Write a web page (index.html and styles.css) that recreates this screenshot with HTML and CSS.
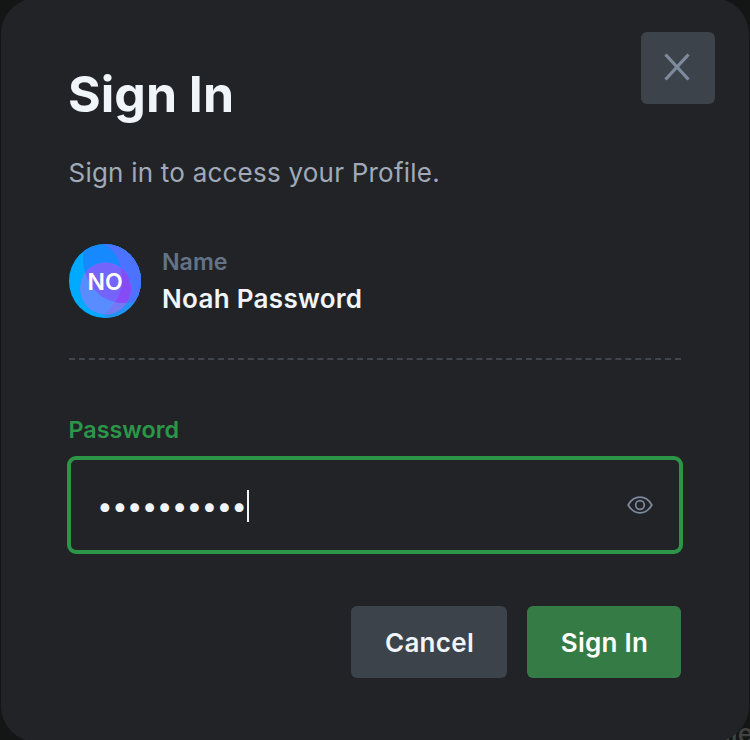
FILE: index.html
```html
<!DOCTYPE html>
<html lang="en">
<head>
<meta charset="utf-8">
<title>Sign In</title>
<link rel="stylesheet" href="styles.css">
</head>
<body>
<span class="backdrop-text" aria-hidden="true">ile</span>
<main class="dialog">
  <header class="header">
    <div>
      <h1 class="title">Sign In</h1>
      <p class="subtitle">Sign in to access your Profile.</p>
    </div>
    <button class="close" aria-label="Close">
      <svg width="26" height="28" viewBox="0 0 26 28"><path d="M1.5 1.5 24.5 26.5M24.5 1.5 1.5 26.5"/></svg>
    </button>
  </header>
  <section class="profile">
    <div class="avatar">
      <svg class="avatar-art" viewBox="0 0 72 74">
        <defs><clipPath id="disc"><ellipse cx="36" cy="37" rx="36" ry="37"/></clipPath></defs>
        <g clip-path="url(#disc)">
          <rect width="72" height="74" fill="#00aaff"/>
          <path d="M31-2C43 3 52 15 53 31C54 48 46 61 33 74H80V-2Z" fill="#2492f3"/>
          <path d="M18-4C12 9 13 26 20 38C30 55 46 63 70 57L80 50V-6Z" fill="#1689ff"/>
          <path d="M31-2C43 3 52 15 53 31C54 42 51 51 46 58C55 60 62 59 70 57L80 50V-6Z" fill="#4b73ff"/>
          <ellipse cx="36.500" cy="44.500" rx="25.500" ry="26" fill="#598cff"/>
          <clipPath id="inner"><ellipse cx="36.500" cy="44.500" rx="25.500" ry="26"/></clipPath>
          <g clip-path="url(#inner)">
            <path d="M31-2C43 3 52 15 53 31C54 48 46 61 33 74H80V-2Z" fill="#7478f2"/>
            <path d="M18-4C12 9 13 26 20 38C30 55 46 63 70 57L80 50V-6Z" fill="#7464fc"/>
            <path d="M31-2C43 3 52 15 53 31C54 42 51 51 46 58C55 60 62 59 70 57L80 50V-6Z" fill="#874bf5"/>
          </g>
        </g>
      </svg>
      <span class="initials">NO</span>
    </div>
    <div>
      <div class="name-label">Name</div>
      <div class="name">Noah Password</div>
    </div>
  </section>
  <svg class="divider" viewBox="0 0 612 2"><path d="M0 1H612"/></svg>
  <div class="label">Password</div>
  <div class="field">
    <span class="mask">••••••••••</span><span class="caret"></span>
    <svg class="eye" width="26" height="18" viewBox="0 0 26 18"><path d="M1.200 9C7 -1.400 19 -1.400 24.800 9C19 19.400 7 19.400 1.200 9Z" /><circle cx="13" cy="9" r="4.300"/></svg>
  </div>
  <footer class="actions">
    <button class="button cancel">Cancel</button>
    <button class="button submit">Sign In</button>
  </footer>
</main>
</body>
</html>
```
FILE: styles.css
```css
* { box-sizing: border-box; }
body {
  margin: 0;
  height: 740px;
  overflow: hidden;
  background: #141515;
  font-family: Inter, sans-serif;
  color: #f0f5f9;
}
.backdrop-text {
  position: absolute;
  right: -3px;
  top: 719px;
  color: #41423f;
  font-size: 26px;
  line-height: 30px;
  font-weight: 600;
}
.dialog {
  position: relative;
  width: 748px;
  height: 744px;
  margin: -2px 1px 0;
  padding: 34px 34px 0 68px;
  border-radius: 36px;
  background: #222327;
}
.header {
  display: flex;
  justify-content: space-between;
  height: 212px;
}
.title {
  margin: 32px 0 0 -1px;
  font-size: 50px;
  line-height: 60px;
  font-weight: 700;
}
.subtitle {
  margin: 32px 0 0 -0.5px;
  color: #a0aab8;
  font-size: 26px;
  line-height: 34px;
  letter-spacing: 0.22px;
}
button {
  margin: 0;
  padding: 0;
  border: 0;
  font-family: inherit;
}
.close {
  display: grid;
  place-items: center;
  width: 74px;
  height: 72px;
  border-radius: 6px;
  background: #3d434b;
}
.close svg {
  fill: none;
  stroke: #7e8a9e;
  stroke-width: 3.3;
  margin-top: -2px;
  margin-right: 2px;
}
.profile {
  display: flex;
  gap: 21px;
  height: 74px;
}
.avatar {
  display: grid;
  place-items: center;
  width: 72px;
  height: 74px;
}
.avatar-art, .initials { grid-area: 1 / 1; }
.avatar-art { width: 72px; height: 74px; }
.initials {
  margin-top: 2px;
  color: #fff;
  font-size: 23px;
  font-weight: 600;
}
.name-label {
  margin-top: 3px;
  color: #647386;
  font-size: 23.2px;
  line-height: 30px;
  font-weight: 600;
}
.name {
  margin-top: 4px;
  font-size: 26px;
  line-height: 36px;
  font-weight: 600;
  letter-spacing: 0.3px;
}
.divider {
  display: block;
  width: 612px;
  height: 2px;
  margin-top: 40px;
  stroke: #41464c;
  stroke-width: 2;
  stroke-dasharray: 6 3.934;
}
.label {
  margin: 55px 0 0 -0.5px;
  height: 30px;
  color: #2b9648;
  font-size: 23.3px;
  line-height: 30px;
  font-weight: 600;
}
.field {
  display: flex;
  align-items: center;
  width: 616px;
  height: 98px;
  margin: 11px 0 0 -2px;
  padding: 0 26px 0 26px;
  border: 4px solid #2b9648;
  border-radius: 9px;
}
.mask {
  width: 150px;
  margin-top: 1px;
  font-size: 28px;
  line-height: 32px;
  letter-spacing: -0.820px;
  white-space: nowrap;
}
.caret {
  width: 2px;
  height: 32px;
  margin-top: 2px;
  background: #f0f5f9;
}
.eye {
  margin-left: auto;
  fill: none;
  stroke: #7e8a9e;
  stroke-width: 1.7;
}
.actions {
  display: flex;
  justify-content: flex-end;
  gap: 20px;
  width: 612px;
  margin-top: 52px;
}
.button {
  height: 72px;
  padding: 1px 0 0 1px;
  border-radius: 6px;
  font-size: 26px;
  line-height: 32px;
  font-weight: 600;
  letter-spacing: 0.3px;
}
.cancel { width: 156px; background: #3d434b; color: #f0f5f9; }
.submit { width: 154px; background: #347b46; color: #fff; }
```
